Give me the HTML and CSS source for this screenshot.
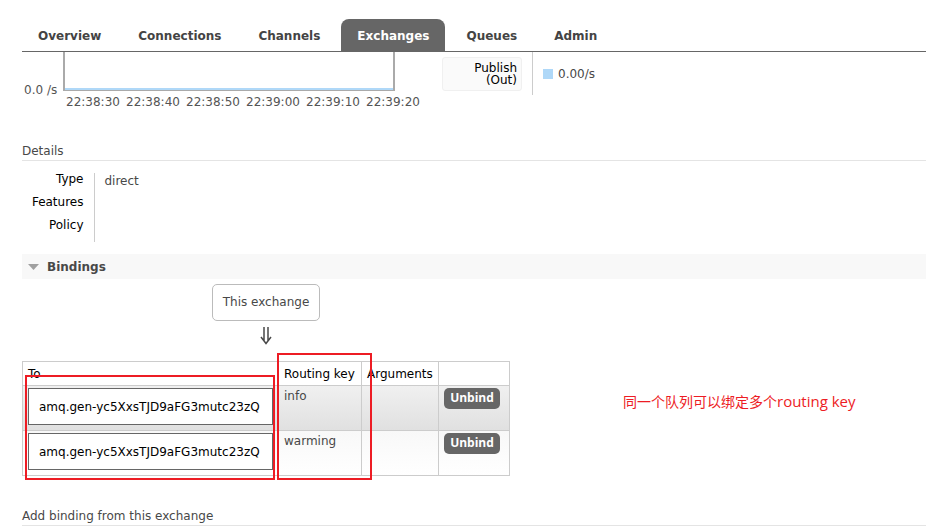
FILE: index.html
```html
<!DOCTYPE html>
<html lang="en">
<head>
<meta charset="utf-8">
<title>Exchange</title>
<link rel="stylesheet" href="styles.css">
</head>
<body>
<nav class="tabs">
  <a href="#">Overview</a>
  <a href="#">Connections</a>
  <a href="#">Channels</a>
  <a href="#" class="selected">Exchanges</a>
  <a href="#">Queues</a>
  <a href="#">Admin</a>
</nav>
<main>
  <section class="rates">
    <div class="y-axis">0.0 /s</div>
    <div class="chart">
      <div class="plot"></div>
      <div class="ticks"><span>22:38:30</span><span>22:38:40</span><span>22:38:50</span><span>22:39:00</span><span>22:39:10</span><span>22:39:20</span></div>
    </div>
    <div class="legend">
      <div class="legend-name">Publish<br>(Out)</div>
      <div class="legend-value"><i class="swatch"></i>0.00/s</div>
    </div>
  </section>

  <h3>Details</h3>
  <table class="facts">
    <tr><th scope="row">Type</th><td>direct</td></tr>
    <tr><th scope="row">Features</th><td></td></tr>
    <tr><th scope="row">Policy</th><td></td></tr>
  </table>

  <h2><svg class="caret" viewBox="0 0 11 6"><path d="M0 0h11L5.500 6z"/></svg>Bindings</h2>
  <section class="bindings">
    <div class="source">
      <span class="exchange">This exchange</span>
      <svg class="arrow" viewBox="0 0 12 18"><path d="M4 0v14M8 0v14M1 10l5 6.500 5-6.500"/></svg>
    </div>
    <table class="list">
      <colgroup><col class="c-to"><col class="c-key"><col class="c-args"><col class="c-act"></colgroup>
      <thead><tr><th>To</th><th>Routing key</th><th>Arguments</th><th></th></tr></thead>
      <tbody>
        <tr class="alt"><td><a class="queue" href="#">amq.gen-yc5XxsTJD9aFG3mutc23zQ</a></td><td>info</td><td></td><td><button type="button">Unbind</button></td></tr>
        <tr><td><a class="queue" href="#">amq.gen-yc5XxsTJD9aFG3mutc23zQ</a></td><td>warming</td><td></td><td><button type="button">Unbind</button></td></tr>
      </tbody>
    </table>
    <div class="mark mark-queues"></div>
    <div class="mark mark-keys"></div>
    <p class="note" lang="zh">同一个队列可以绑定多个<span lang="en">routing key</span></p>
  </section>

  <h3>Add binding from this exchange</h3>
</main>
</body>
</html>
```
FILE: styles.css
```css
* { box-sizing: border-box; }
html { overflow: hidden; }
body {
  margin: 0;
  padding: 19px 0 0 22px;
  background: #fff;
  color: #484848;
  font: 12px/16px "DejaVu Sans", Verdana, sans-serif;
}
a { color: inherit; text-decoration: none; }

.tabs {
  display: flex;
  gap: 5px;
  border-bottom: 1px solid #666;
}
.tabs a {
  padding: 9px 16px 7px;
  border-radius: 8px 8px 0 0;
  color: #444;
  font-weight: bold;
}
.tabs .selected { background: #666; color: #fff; }

.rates { display: flex; height: 91px; }
.y-axis { width: 41px; padding: 30px 0 0 2px; color: #545454; white-space: nowrap; }
.chart { width: 379px; color: #545454; }
.plot {
  width: 332px;
  height: 39px;
  border: solid #aaa;
  border-width: 0 2px 1px;
  box-shadow: inset 0 -2px #afd8f8;
}
.ticks { display: flex; gap: 4px; padding: 3px 0 0 3px; }
.ticks span { flex: 0 0 56px; white-space: nowrap; }
.legend { display: flex; height: 43px; }
.legend-name {
  width: 80px;
  height: 34px;
  margin: 5px 10px 0 0;
  padding: 4px 4px 4px 0;
  border: 1px solid #f0f0f0;
  border-radius: 3px;
  background: #fafafa;
  color: #000;
  line-height: 12px;
  text-align: right;
}
.legend-value {
  display: flex;
  align-items: center;
  gap: 5px;
  padding-left: 10px;
  border-left: 1px solid #ccc;
}
.swatch { width: 10px; height: 10px; background: #afd8f8; }

h3 {
  margin: 0;
  padding-bottom: 1px;
  border-bottom: 1px solid #e4e4e4;
  font-size: 12px;
  font-weight: normal;
}

.facts { margin: 12px 0; border-collapse: collapse; }
.facts th, .facts td { height: 23px; padding: 0; vertical-align: top; }
.facts th {
  width: 72px;
  padding-right: 10px;
  border-right: 1px solid #ccc;
  color: #000;
  font-weight: normal;
  line-height: 12px;
  text-align: right;
}
.facts td { padding-left: 10px; }

h2 {
  display: flex;
  align-items: center;
  gap: 8px;
  height: 25px;
  margin: 0;
  padding-left: 6px;
  background: #f8f8f8;
  font-size: 12px;
}
.caret { width: 11px; height: 6px; fill: #a0a0a0; }

.bindings { position: relative; padding: 5px 0 32px; }
.source {
  display: flex;
  flex-direction: column;
  align-items: center;
  width: 488px;
  height: 77px;
}
.exchange {
  padding: 10px;
  border: 1px solid #bbb;
  border-radius: 5px;
  white-space: nowrap;
  line-height: 15px;
}
.arrow { width: 12px; height: 18px; margin-top: 6px; fill: none; stroke: #484848; stroke-width: 1.5; }

.list { width: 488px; border-collapse: collapse; table-layout: fixed; }
.c-to { width: 256px; }
.c-key { width: 83px; }
.c-args { width: 77px; }
.c-act { width: 71px; }
.list th, .list td { padding: 2px 5px; border: 1px solid #ccc; text-align: left; vertical-align: top; }
.list th { height: 24px; padding-top: 4px; color: #000; font-weight: normal; white-space: nowrap; }
.list td { height: 45px; }
.list tbody tr { background: linear-gradient(#f8f8f8, #fff); }
.list tbody .alt { background: linear-gradient(#f0f0f0, #e0e0e0); }
.queue {
  display: block;
  padding: 11px 10px 9px;
  border: 1px solid #666;
  background: #fff;
  color: #000;
  line-height: 15px;
  white-space: nowrap;
}
button {
  display: block;
  width: 56px;
  height: 21px;
  padding: 0 0 1px;
  border: 0;
  border-radius: 5px;
  background: #666;
  color: #fff;
  font: bold 12px/20px "Open Sans", sans-serif;
}

/* Annotations drawn over the bindings table */
.mark { position: absolute; border: 2px solid #ed1c24; }
.mark-queues { left: 3px; top: 96px; width: 250px; height: 105px; }
.mark-keys { left: 255px; top: 74px; width: 95px; height: 127px; }
.note {
  position: absolute;
  left: 601px;
  top: 112px;
  margin: 0;
  color: #ed1c24;
  font: 14px/20px "Open Sans", "Noto Sans CJK SC", sans-serif;
  white-space: nowrap;
}
.note span { font-size: 15px; }
```
